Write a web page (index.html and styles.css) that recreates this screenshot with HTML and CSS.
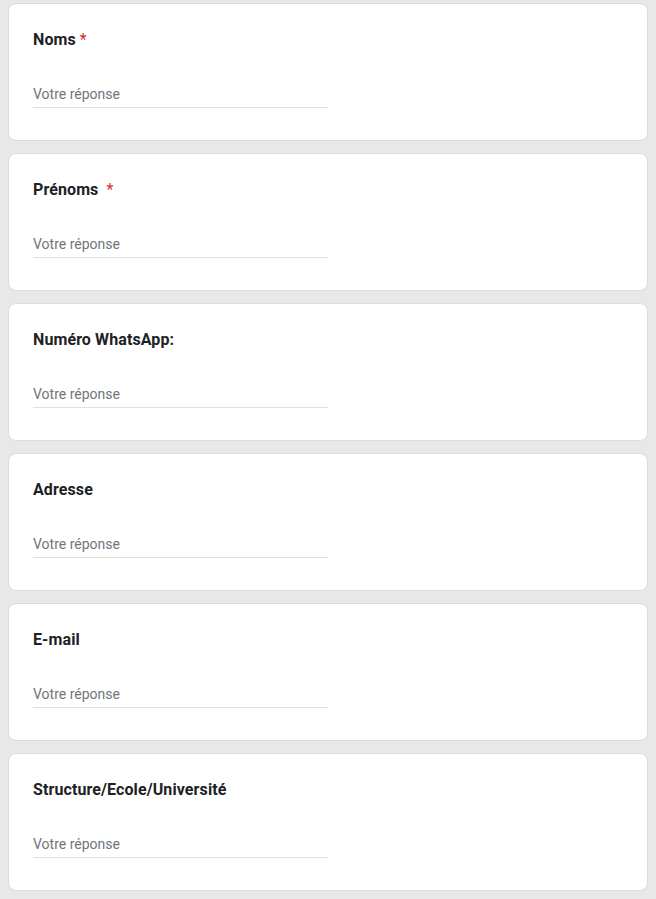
FILE: index.html
```html
<!DOCTYPE html>
<html lang="fr">
<head>
<meta charset="utf-8">
<title>Formulaire</title>
<link rel="stylesheet" href="styles.css">
</head>
<body>
<main class="form">
  <section class="card">
    <div class="title">Noms<span class="req">*</span></div>
    <input class="answer" type="text" placeholder="Votre réponse">
  </section>
  <section class="card">
    <div class="title">Prénoms <span class="req">*</span></div>
    <input class="answer" type="text" placeholder="Votre réponse">
  </section>
  <section class="card">
    <div class="title">Numéro WhatsApp:</div>
    <input class="answer" type="text" placeholder="Votre réponse">
  </section>
  <section class="card">
    <div class="title">Adresse</div>
    <input class="answer" type="text" placeholder="Votre réponse">
  </section>
  <section class="card">
    <div class="title">E-mail</div>
    <input class="answer" type="text" placeholder="Votre réponse">
  </section>
  <section class="card">
    <div class="title">Structure/Ecole/Université</div>
    <input class="answer" type="text" placeholder="Votre réponse">
  </section>
</main>
</body>
</html>
```
FILE: styles.css
```css
html, body {
  margin: 0;
  padding: 0;
  background: #e8e8e8;
}
body {
  font-family: Roboto, "Liberation Sans", Arial, sans-serif;
}
.form {
  display: flex;
  flex-direction: column;
  gap: 12px;
  padding: 3px 8px 9px 8px;
}
.card {
  background: #ffffff;
  border: 1px solid #dadce0;
  border-radius: 8px;
  padding: 24px 24px 32px 24px;
  display: flex;
  flex-direction: column;
}
.title {
  font-size: 16px;
  line-height: 24px;
  font-weight: 700;
  color: #202124;
  letter-spacing: 0.1px;
}
.req {
  color: #d93025;
  font-weight: 400;
  margin-left: 4px;
}
.answer {
  margin-top: 16px;
  width: 295px;
  height: 40px;
  box-sizing: border-box;
  padding: 18px 0 5px 0;
  border: none;
  border-bottom: 1px solid #e0e0e0;
  outline: none;
  font-family: Roboto, "Liberation Sans", Arial, sans-serif;
  font-size: 14px;
  line-height: 16px;
  color: #202124;
  background: transparent;
}
.answer::placeholder {
  color: #70757a;
  opacity: 1;
}
```
